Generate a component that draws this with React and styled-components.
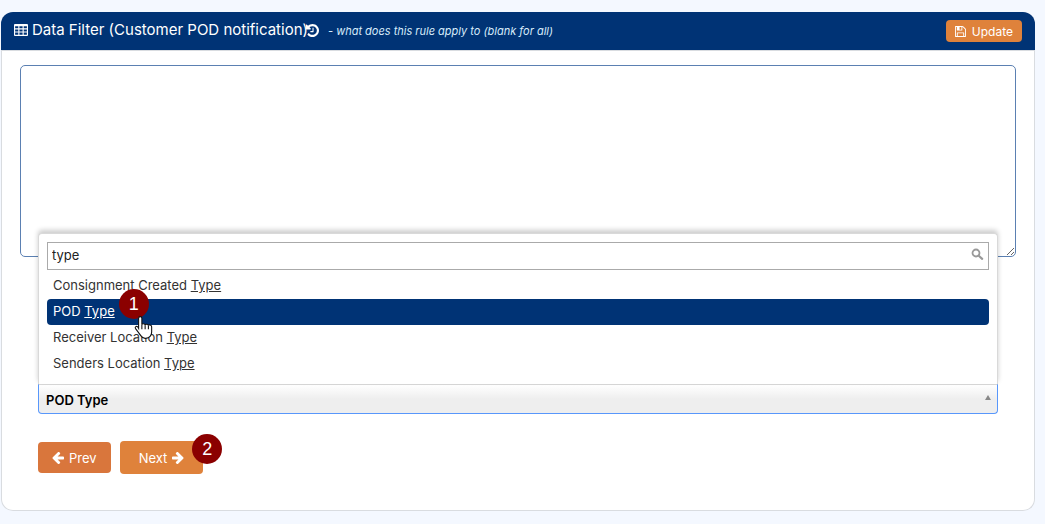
import { useState } from "react";
import styled, { createGlobalStyle, css } from "styled-components";

const navy = "#003375";
const orange = "#df823b";

const GlobalStyle = createGlobalStyle`
  * {
    box-sizing: border-box;
  }

  body {
    margin: 0;
    background: #f4f8ff;
    color: #333;
    font-family: Inter, "Liberation Sans", sans-serif;
    font-size: 13px;
  }

  button,
  input,
  textarea {
    font-family: inherit;
  }
`;

const Page = styled.main`
  padding: 12px 10px 13px 1px;
`;

const Card = styled.section`
  background: #fff;
  border: 1px solid #d9dce0;
  border-top: 0;
  border-radius: 12px;
`;

const CardHeader = styled.header`
  display: flex;
  align-items: center;
  justify-content: space-between;
  height: 39px;
  margin: 0 -1px;
  padding: 0 13px;
  background: ${navy};
  border-bottom: 1px solid #d9dce0;
  border-radius: 12px 12px 0 0;
  color: #fff;
`;

const Heading = styled.div`
  display: flex;
  align-items: center;
  padding-bottom: 2px;
`;

const Title = styled.h1`
  display: flex;
  align-items: center;
  gap: 4px;
  margin: 0 -2px 0 0;
  font-size: 15px;
  font-weight: 400;
  line-height: 20px;
`;

const Hint = styled.em`
  margin: 2px 0 0 9px;
  color: #d6ebfa;
  font-size: 11px;
  line-height: 20px;
`;

const Icon = styled.svg`
  display: block;
  flex: none;
  fill: currentColor;
`;

const Button = styled.button`
  display: flex;
  align-items: center;
  justify-content: center;
  gap: 5px;
  height: 31px;
  padding: 0 14px;
  border: 0;
  border-radius: 4px;
  background: #d9763c;
  color: #fff;
  font-size: 13px;
  cursor: pointer;

  ${(p) =>
    p.$small &&
    css`
      gap: 6px;
      height: 22px;
      padding: 0 9px;
      background: ${orange};
      font-size: 12px;
    `}

  ${(p) =>
    p.$active &&
    css`
      height: 33px;
      padding: 0 19px;
      background: ${orange};
    `}
`;

const CardBody = styled.div`
  padding: 14px 18px 36px;
`;

const FilterText = styled.textarea`
  display: block;
  width: 100%;
  height: 192px;
  border: 1px solid #5b80b2;
  border-radius: 5px;
  background: #fff;
  outline: 0;
`;

const Controls = styled.div`
  padding: 127px 18px 0;
`;

const Select = styled.div`
  position: relative;
`;

const Choice = styled.button`
  display: flex;
  align-items: center;
  justify-content: space-between;
  width: 100%;
  height: 30px;
  padding: 2px 6px 0 7px;
  border: 1px solid #5897fb;
  border-top-color: #d9d9d9;
  border-radius: 0 0 4px 4px;
  background: linear-gradient(#fff, #eee 50%);
  color: #000;
  font-size: 13px;
  font-weight: 600;
`;

const Drop = styled.div`
  position: absolute;
  right: 0;
  bottom: 100%;
  left: 0;
  height: 151px;
  padding: 8px;
  border: 1px solid #d9d9d9;
  border-bottom: 0;
  border-radius: 4px 4px 0 0;
  background: #fff;
  box-shadow: 0 -3px 5px rgba(0, 0, 0, 0.2);
`;

const Search = styled.label`
  display: flex;
  align-items: center;
  height: 28px;
  padding: 0 4px 3px;
  border: 1px solid #aaa;
  color: #999;
`;

const SearchInput = styled.input`
  flex: 1;
  min-width: 0;
  padding: 0;
  border: 0;
  outline: 0;
  background: transparent;
  color: #222;
  font-size: 13px;
`;

const Options = styled.ul`
  margin: 3px 0 0;
  padding: 0;
  list-style: none;
`;

const Option = styled.li`
  height: 26px;
  padding: 0 6px;
  border-radius: 4px;
  background: ${(p) => (p.$active ? navy : "transparent")};
  color: ${(p) => (p.$active ? "#fff" : "#333")};
  font-size: 13px;
  line-height: 24px;
  cursor: pointer;
`;

const Anchor = styled.span`
  position: relative;
`;

const Step = styled.span`
  position: absolute;
  top: ${(p) => p.$top}px;
  left: ${(p) => p.$left}px;
  z-index: 1;
  width: 30px;
  height: 30px;
  border-radius: 50%;
  background: #8b0000;
  color: #fff;
  font-size: 18px;
  font-family: "Liberation Sans", Arial, sans-serif;
  line-height: 30px;
  text-align: center;
`;

const Pointer = styled.svg`
  position: absolute;
  top: 12px;
  left: 18px;
  z-index: 2;
`;

const Actions = styled.div`
  display: flex;
  align-items: center;
  gap: 9px;
  margin-top: 27px;
`;

const TableIcon = () => (
  <Icon width="14" height="12" viewBox="0 0 15 12" preserveAspectRatio="none">
    <path
      fillRule="evenodd"
      d="M1 0h13a1 1 0 0 1 1 1v10a1 1 0 0 1-1 1H1a1 1 0 0 1-1-1V1a1 1 0 0 1 1-1zM1.2 2.2v2.1h3.4V2.2zm4.6 0v2.1h3.4V2.2zm4.6 0v2.1h3.4V2.2zM1.2 5.4v2.1h3.4V5.4zm4.6 0v2.1h3.4V5.4zm4.6 0v2.1h3.4V5.4zM1.2 8.6v2.1h3.4V8.6zm4.6 0v2.1h3.4V8.6zm4.6 0v2.1h3.4V8.6z"
    />
  </Icon>
);

const HistoryIcon = () => (
  <Icon width="13" height="13" viewBox="128 128 1536 1536">
    <path d="M1664 896q0 156-61 298t-164 245-245 164-298 61q-172 0-327-72.5t-264-204.5q-7-10-6.5-22.5t8.5-20.5l137-138q10-9 25-9 16 2 23 12 73 95 179 147t225 52q104 0 198.5-40.5t163.5-109.5 109.5-163.5 40.5-198.5-40.5-198.5-109.5-163.5-163.5-109.5-198.5-40.5q-98 0-188 35.5t-160 101.5l137 138q31 30 14 69-17 40-59 40h-448q-26 0-45-19t-19-45v-448q0-42 40-59 39-17 69 14l130 129q107-101 244.5-156.5t284.5-55.5q156 0 298 61t245 164 164 245 61 298zm-640-288v448q0 14-9 23t-23 9h-320q-14 0-23-9t-9-23v-64q0-14 9-23t23-9h224v-352q0-14 9-23t23-9h64q14 0 23 9t9 23z" />
  </Icon>
);

const SaveIcon = () => (
  <Icon width="11" height="11" viewBox="0 128 1536 1536">
    <path d="M384 1536h768v-384h-768v384zm896 0h128v-896q0-14-10-38.5t-20-34.5l-281-281q-10-10-34-20t-39-10v416q0 40-28 68t-68 28h-576q-40 0-68-28t-28-68v-416h-128v1280h128v-416q0-40 28-68t68-28h832q40 0 68 28t28 68v416zm-384-928v-320q0-13-9.5-22.5t-22.5-9.5h-192q-13 0-22.5 9.5t-9.5 22.5v320q0 13 9.5 22.5t22.5 9.5h192q13 0 22.5-9.5t9.5-22.5zm640 32v928q0 40-28 68t-68 28h-1344q-40 0-68-28t-28-68v-1344q0-40 28-68t68-28h928q40 0 88 20t76 48l280 280q28 28 48 76t20 88z" />
  </Icon>
);

const ArrowIcon = ({ right }) => (
  <Icon width="12" height="12" viewBox="0 -64 1536 1536">
    <path
      transform={right ? "translate(1536 0) scale(-1 1)" : undefined}
      d="M1536 640v128q0 53-32.5 90.5t-84.5 37.5h-704l293 294q38 36 38 90t-38 90l-75 76q-37 37-90 37-52 0-91-37l-651-652q-37-37-37-90 0-52 37-91l651-650q38-38 91-38 52 0 90 38l75 74q38 38 38 91t-38 91l-293 293h704q52 0 84.5 37.5t32.5 90.5z"
    />
  </Icon>
);

const SearchIcon = () => (
  <Icon width="13" height="13" viewBox="0 0 13 13">
    <circle cx="5" cy="5" r="3.5" fill="none" stroke="currentColor" strokeWidth="1.8" />
    <path d="M8 8l3.2 2.8" stroke="currentColor" strokeWidth="2.2" strokeLinecap="round" />
  </Icon>
);

const HandPointer = () => (
  <Pointer width="21" height="25" viewBox="0 0 19 23">
    <path
      d="M6.5 1.5c1 0 1.5.7 1.5 1.5v6c0-1.4 3-1.4 3 .4 0-1.3 3-1.2 3 .5 0-1.2 3-1.1 3 .8v5c0 3-2 5.8-5.5 5.8H11c-2 0-3-.9-4-2.5l-4.8-6.5c-1-1.5.8-2.7 2-1.6L5 12.3V3c0-.8.5-1.5 1.5-1.5z"
      fill="#fff"
      stroke="#111"
    />
    <path d="M8 9v4M11 9.5v3.5M14 10v3" stroke="#111" fill="none" />
  </Pointer>
);

const options = [
  { id: "consignment", prefix: "Consignment Created " },
  { id: "pod", prefix: "POD " },
  { id: "receiver", prefix: "Receiver Location " },
  { id: "senders", prefix: "Senders Location " },
];

export default function App() {
  const [filter, setFilter] = useState("");
  const [term, setTerm] = useState("type");
  const [active, setActive] = useState("pod");

  return (
    <>
      <GlobalStyle />
      <Page>
        <Card>
          <CardHeader>
            <Heading>
              <Title>
                <TableIcon />
                Data Filter (Customer POD notification)
              </Title>
              <HistoryIcon />
              <Hint>- what does this rule apply to (blank for all)</Hint>
            </Heading>
            <Button type="button" $small>
              <SaveIcon />
              Update
            </Button>
          </CardHeader>

          <CardBody>
            <FilterText
              aria-label="Data filter"
              value={filter}
              onChange={(e) => setFilter(e.target.value)}
            />
            <Controls>
              <Select>
                <Drop>
                  <Search>
                    <SearchInput
                      aria-label="Search fields"
                      value={term}
                      onChange={(e) => setTerm(e.target.value)}
                    />
                    <SearchIcon />
                  </Search>
                  <Options role="listbox" aria-label="Fields">
                    {options.map(({ id, prefix }) => (
                      <Option
                        key={id}
                        role="option"
                        aria-selected={id === active}
                        $active={id === active}
                        onMouseEnter={() => setActive(id)}
                      >
                        {prefix}
                        <u>Type</u>
                        {id === "pod" && (
                          <Anchor>
                            <Step $top={-14} $left={4}>
                              1
                            </Step>
                            <HandPointer />
                          </Anchor>
                        )}
                      </Option>
                    ))}
                  </Options>
                </Drop>
                <Choice type="button" aria-haspopup="listbox" aria-expanded="true">
                  POD Type
                  <Icon width="6" height="12" viewBox="0 0 6 12">
                    <path d="M3 1l3 5H0z" fill="#888" />
                  </Icon>
                </Choice>
              </Select>
              <Actions>
                <Button type="button">
                  <ArrowIcon />
                  Prev
                </Button>
                <Button type="button" $active>
                  Next
                  <ArrowIcon right />
                </Button>
                <Anchor>
                  <Step $top={-24} $left={-20}>
                    2
                  </Step>
                </Anchor>
              </Actions>
            </Controls>
          </CardBody>
        </Card>
      </Page>
    </>
  );
}
